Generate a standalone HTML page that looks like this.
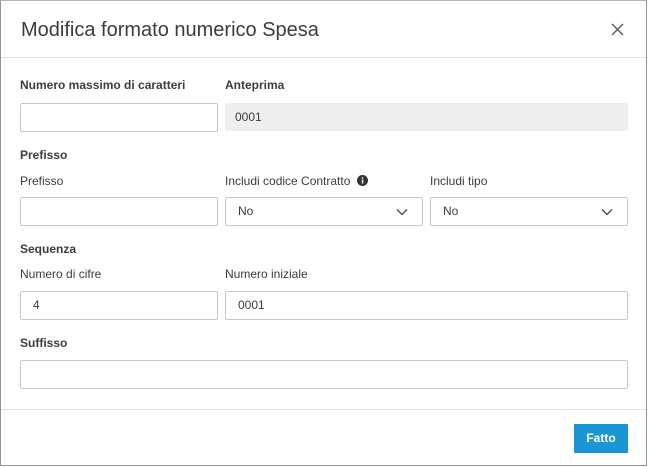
<!DOCTYPE html>
<html><head><style>
*{box-sizing:border-box;margin:0;padding:0}
body{width:648px;height:467px;background:#fff;font-family:"Liberation Sans",sans-serif;position:relative;overflow:hidden;color:#3c3c3c}
.frame{position:absolute;left:0;top:0;width:647px;height:466px;border:1px solid #8a96a3;border-top-color:#b0b8c2}
.a{position:absolute}
.t{font-size:20px;color:#3c3c3c;left:21px;top:19px}
.h{font-size:12px;font-weight:bold;color:#3c3c3c}
.l{font-size:12px;color:#3c3c3c}
.in{position:absolute;height:29px;border:1px solid #c8c8c8;border-radius:2px;background:#fff;font-size:12px;padding-left:12px;line-height:27px;color:#3c3c3c}
.ro{background:#eeeeee;border-color:#eeeeee;padding-left:9px}
.hr{position:absolute;left:1px;width:645px;height:1px;background:#e2e2e2}
.chev{position:absolute;right:14px;top:10px}
</style></head><body>
<div class="frame"></div>
<div class="a t">Modifica formato numerico Spesa</div>
<svg class="a" style="left:611px;top:23px" width="13" height="13"><path d="M1 1L12 12M12 1L1 12" stroke="#555" stroke-width="1.3"/></svg>
<div class="hr" style="top:57px"></div>

<div class="a h" style="left:20px;top:78px">Numero massimo di caratteri</div>
<div class="a h" style="left:225px;top:78px">Anteprima</div>
<div class="in" style="left:20px;top:103px;width:198px"></div>
<div class="in ro" style="left:225px;top:103px;width:403px;height:28px">0001</div>

<div class="a h" style="left:20px;top:148px">Prefisso</div>
<div class="a l" style="left:20px;top:174px">Prefisso</div>
<div class="a l" style="left:225px;top:174px">Includi codice Contratto</div>
<svg class="a" style="left:357px;top:175px" width="11" height="11"><circle cx="5.5" cy="5.5" r="5.5" fill="#333"/><rect x="4.8" y="4.5" width="1.5" height="4" fill="#fff"/><rect x="4.8" y="2.3" width="1.5" height="1.4" fill="#fff"/></svg>
<div class="a l" style="left:430px;top:174px">Includi tipo</div>
<div class="in" style="left:20px;top:197px;width:198px"></div>
<div class="in" style="left:225px;top:197px;width:198px">No<svg class="chev" width="12" height="8"><path d="M1 1.5L6 6.5L11 1.5" stroke="#444" stroke-width="1.3" fill="none"/></svg></div>
<div class="in" style="left:430px;top:197px;width:198px">No<svg class="chev" width="12" height="8"><path d="M1 1.5L6 6.5L11 1.5" stroke="#444" stroke-width="1.3" fill="none"/></svg></div>

<div class="a h" style="left:20px;top:242px">Sequenza</div>
<div class="a l" style="left:20px;top:267px">Numero di cifre</div>
<div class="a l" style="left:225px;top:267px">Numero iniziale</div>
<div class="in" style="left:20px;top:291px;width:198px">4</div>
<div class="in" style="left:225px;top:291px;width:403px">0001</div>

<div class="a h" style="left:20px;top:336px">Suffisso</div>
<div class="in" style="left:20px;top:360px;width:608px"></div>

<div class="hr" style="top:409px"></div>
<div class="a" style="left:574px;top:424px;width:54px;height:29px;background:#1a96d4;color:#fff;font-size:12px;font-weight:bold;text-align:center;line-height:29px">Fatto</div>
</body></html>
